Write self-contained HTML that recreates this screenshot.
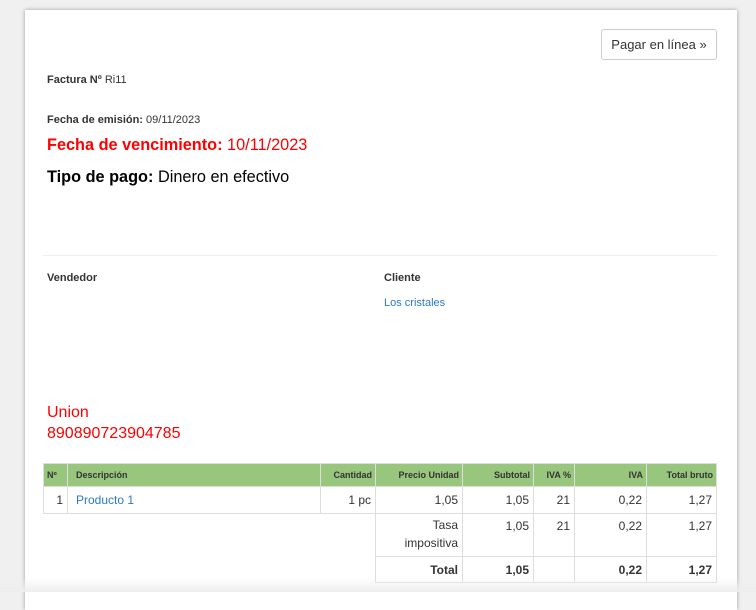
<!DOCTYPE html><html><head><style>
body{margin:0;background:#f0f0f0;font-family:"Liberation Sans",sans-serif;color:#333;width:756px;height:592px;overflow:hidden;position:relative}
.card{position:absolute;left:25px;top:10px;width:712px;height:600px;background:#fff;box-shadow:0 0 4px rgba(0,0,0,.35)}
.a{position:absolute;white-space:nowrap}
.btn{position:absolute;left:576px;top:19px;width:116px;height:31px;border:1px solid #ccc;border-radius:3px;font-size:13px;line-height:29px;text-align:center;color:#333;box-sizing:border-box}
table{position:absolute;left:18px;top:453px;border-collapse:collapse;font-size:12px;table-layout:fixed;width:673px}
td,th{border:1px solid #ddd;padding:0 4px;text-align:right;vertical-align:top;overflow:hidden;white-space:nowrap}
th{background:#97c67c;font-size:9px;font-weight:bold;height:22px;vertical-align:middle;padding:0 3px}
.b{color:#2a7ac0}
</style></head><body><div class="card">
<div class="btn">Pagar en línea »</div>
<div class="a" style="left:22px;top:64px;font-size:11px"><b>Factura Nº</b> Ri11</div>
<div class="a" style="left:22px;top:104px;font-size:11px"><b>Fecha de emisión:</b> 09/11/2023</div>
<div class="a" style="left:22px;top:126px;font-size:16.3px;color:#f00"><b>Fecha de vencimiento:</b> 10/11/2023</div>
<div class="a" style="left:22px;top:158px;font-size:16.3px;color:#000"><b>Tipo de pago:</b> Dinero en efectivo</div>
<div class="a" style="left:18px;top:245px;width:674px;border-top:1px solid #eee"></div>
<div class="a" style="left:22px;top:262px;font-size:11px;font-weight:bold">Vendedor</div>
<div class="a" style="left:359px;top:262px;font-size:11px;font-weight:bold">Cliente</div>
<div class="a b" style="left:359px;top:287px;font-size:11px">Los cristales</div>
<div class="a" style="left:22px;top:392px;font-size:16px;color:#f00;line-height:21px">Union<br>890890723904785</div>
<table>
<colgroup><col style="width:24px"><col style="width:253px"><col style="width:55px"><col style="width:87px"><col style="width:71px"><col style="width:41px"><col style="width:72px"><col style="width:70px"></colgroup>
<tr><th style="text-align:left">Nº</th><th style="text-align:left;padding-left:8px">Descripción</th><th>Cantidad</th><th>Precio Unidad</th><th>Subtotal</th><th>IVA %</th><th>IVA</th><th>Total bruto</th></tr>
<tr style="height:27px"><td style="vertical-align:middle">1</td><td class="b" style="text-align:left;vertical-align:middle;padding-left:8px">Producto 1</td><td style="vertical-align:middle">1 pc</td><td style="vertical-align:middle">1,05</td><td style="vertical-align:middle">1,05</td><td style="vertical-align:middle">21</td><td style="vertical-align:middle">0,22</td><td style="vertical-align:middle">1,27</td></tr>
<tr style="height:43px"><td colspan="3" style="border:none;border-top:1px solid #ddd"></td><td style="line-height:18px;padding-top:2px;white-space:normal">Tasa<br>impositiva</td><td style="padding-top:5px">1,05</td><td style="padding-top:5px">21</td><td style="padding-top:5px">0,22</td><td style="padding-top:5px">1,27</td></tr>
<tr style="height:26px;font-weight:bold"><td colspan="3" style="border:none"></td><td style="vertical-align:middle">Total</td><td style="vertical-align:middle">1,05</td><td></td><td style="vertical-align:middle">0,22</td><td style="vertical-align:middle">1,27</td></tr>
</table>
</div>
<div style="position:absolute;left:0;top:578px;width:756px;height:14px;background:linear-gradient(rgba(240,240,240,0),#eee)"></div>
</body></html>
